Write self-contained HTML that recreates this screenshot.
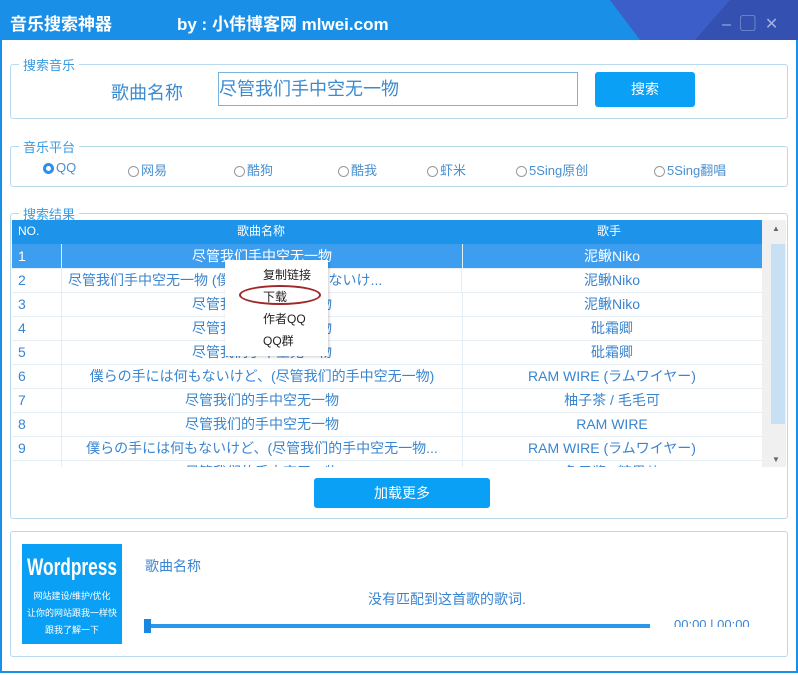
<!DOCTYPE html><html><head><meta charset="utf-8"><style>
body{margin:0;width:798px;height:675px;overflow:hidden;font-family:"Liberation Sans","Noto Sans CJK SC",sans-serif;background:#fff;position:relative}
.a{position:absolute}
.win{position:absolute;left:0;top:0;width:794px;height:671px;border:2px solid #1a8fe8;border-top:none}
fieldset{position:absolute;border:1px solid #b9d9ec;border-radius:3px;margin:0;padding:0}
legend{color:#3b9be0;font-size:13px;padding:0 4px;margin-left:8px}
.row{position:absolute;left:12px;width:750px;height:24px;border-bottom:1px solid #e6eef5;color:#3a85d0;font-size:14px;line-height:24px}
.row span{position:absolute;top:0;text-align:center;white-space:nowrap;overflow:hidden}
.c1{left:0;width:50px;text-align:left!important;padding-left:6px;box-sizing:border-box;border-right:1px solid #e6eef5;height:24px}
.c2{left:50px;width:400px;border-right:1px solid #e6eef5;height:24px}
.c3{left:450px;width:300px}
.radio{position:absolute;top:160px;font-size:13px;color:#4a8fd0}
.radio i{display:inline-block;width:11px;height:11px;border:1px solid #999;border-radius:50%;vertical-align:-2px;margin-right:2px;background:#fff;box-sizing:border-box}
</style></head><body>
<div class="win"></div>
<div class="a" style="left:0;top:0;width:798px;height:40px;background:#1a8fe8"></div>
<svg class="a" style="left:600px;top:0" width="198" height="40"><polygon points="10,0 198,0 198,40 40,40" fill="#3b5ec8"/><polygon points="130,0 198,0 198,40 95,40" fill="#3450b0"/></svg>
<div class="a" style="left:10px;top:10px;color:#fff;font-size:17px;font-weight:bold">音乐搜索神器</div>
<div class="a" style="left:177px;top:10px;color:#fff;font-size:17px;font-weight:bold">by : 小伟博客网 mlwei.com</div>
<div class="a" style="left:722px;top:10px;color:#9fb4de;font-size:16px;letter-spacing:9px">–▢✕</div>

<fieldset style="left:10px;top:55px;width:776px;height:62px"><legend>搜索音乐</legend></fieldset>
<div class="a" style="left:111px;top:79px;color:#3b8bd0;font-size:18px">歌曲名称</div>
<div class="a" style="left:218px;top:72px;color:#3b8bd0;font-size:18px;line-height:32px;box-sizing:border-box;width:360px;height:34px;border:1px solid #7ab4dc">尽管我们手中空无一物</div>
<div class="a" style="left:595px;top:72px;width:100px;height:35px;background:#0aa0f6;border-radius:3px;color:#fff;font-size:14px;text-align:center;line-height:35px">搜索</div>

<fieldset style="left:10px;top:137px;width:776px;height:48px"><legend>音乐平台</legend></fieldset>
<div class="radio" style="left:43px"><i style="border:3px solid #2a8ff0;background:#fff"></i>QQ</div>
<div class="radio" style="left:128px"><i></i>网易</div>
<div class="radio" style="left:234px"><i></i>酷狗</div>
<div class="radio" style="left:338px"><i></i>酷我</div>
<div class="radio" style="left:427px"><i></i>虾米</div>
<div class="radio" style="left:516px"><i></i>5Sing原创</div>
<div class="radio" style="left:654px"><i></i>5Sing翻唱</div>

<fieldset style="left:10px;top:204px;width:776px;height:313px"><legend>搜索结果</legend></fieldset>
<div class="a" style="left:12px;top:220px;width:750px;height:24px;background:#1d93ea;color:#fff;font-size:12px;line-height:22px"><span class="a" style="left:6px">NO.</span><span class="a" style="left:225px">歌曲名称</span><span class="a" style="left:585px">歌手</span></div>
<div class="a" style="left:762px;top:220px;width:24px;height:247px;background:#f0f0f0"></div>
<div class="a" style="left:771px;top:244px;width:14px;height:180px;background:#c8e0f4"></div>
<div class="a" style="left:772px;top:224px;font-size:8px;color:#666">▲</div>
<div class="a" style="left:772px;top:455px;font-size:8px;color:#666">▼</div>
<div class="a" style="left:12px;top:244px;width:750px;height:223px;overflow:hidden">
<div class="row" style="top:0;left:0;background:#3d9ef0;color:#fff"><span class="c1">1</span><span class="c2">尽管我们手中空无一物</span><span class="c3">泥鳅Niko</span></div>
<div class="row" style="top:24px;left:0"><span class="c1">2</span><span class="c2" style="text-align:left;padding-left:6px;box-sizing:border-box">尽管我们手中空无一物 (僕らの手には何もないけ...</span><span class="c3">泥鳅Niko</span></div>
<div class="row" style="top:48px;left:0"><span class="c1">3</span><span class="c2">尽管我们手中空无一物</span><span class="c3">泥鳅Niko</span></div>
<div class="row" style="top:72px;left:0"><span class="c1">4</span><span class="c2">尽管我们手中空无一物</span><span class="c3">砒霜卿</span></div>
<div class="row" style="top:96px;left:0"><span class="c1">5</span><span class="c2">尽管我们手中空无一物</span><span class="c3">砒霜卿</span></div>
<div class="row" style="top:120px;left:0"><span class="c1">6</span><span class="c2">僕らの手には何もないけど、(尽管我们的手中空无一物)</span><span class="c3">RAM WIRE (ラムワイヤー)</span></div>
<div class="row" style="top:144px;left:0"><span class="c1">7</span><span class="c2">尽管我们的手中空无一物</span><span class="c3">柚子茶 / 毛毛可</span></div>
<div class="row" style="top:168px;left:0"><span class="c1">8</span><span class="c2">尽管我们的手中空无一物</span><span class="c3">RAM WIRE</span></div>
<div class="row" style="top:192px;left:0"><span class="c1">9</span><span class="c2">僕らの手には何もないけど、(尽管我们的手中空无一物...</span><span class="c3">RAM WIRE (ラムワイヤー)</span></div>
<div class="row" style="top:216px;left:0"><span class="c1">10</span><span class="c2">尽管我们的手中空无一物</span><span class="c3">鱼子酱 / 糖果儿</span></div>
</div>
<div class="a" style="left:225px;top:260px;width:103px;height:96px;background:#fff;box-shadow:1px 1px 3px rgba(0,0,0,.2);font-size:12px;color:#222">
<div class="a" style="left:38px;top:6px">复制链接</div><div class="a" style="left:38px;top:28px">下载</div><div class="a" style="left:38px;top:50px">作者QQ</div><div class="a" style="left:38px;top:72px">QQ群</div></div>
<div class="a" style="left:239px;top:285px;width:82px;height:20px;border:2px solid #a02828;border-radius:50%;box-sizing:border-box"></div>
<div class="a" style="left:314px;top:478px;width:176px;height:30px;background:#0aa0f6;border-radius:3px;color:#fff;font-size:14px;text-align:center;line-height:30px">加载更多</div>

<div class="a" style="left:10px;top:531px;width:776px;height:124px;border:1px solid #b9d9ec;border-radius:3px"></div>
<div class="a" style="left:22px;top:544px;width:100px;height:100px;background:#0aa0f6;color:#fff;text-align:center;overflow:hidden">
<div style="font-size:24px;font-weight:bold;margin-top:10px;transform:scaleX(.72);white-space:nowrap;margin-left:-20px;margin-right:-20px">Wordpress</div>
<div style="font-size:9px;margin-top:6px;line-height:17px">网站建设/维护/优化<br>让你的网站跟我一样快<br>跟我了解一下</div></div>
<div class="a" style="left:145px;top:556px;font-size:14px;color:#3a85d0">歌曲名称</div>
<div class="a" style="left:368px;top:589px;font-size:14px;color:#3a85d0">没有匹配到这首歌的歌词.</div>
<div class="a" style="left:147px;top:624px;width:503px;height:4px;background:#2a98e8"></div>
<div class="a" style="left:144px;top:619px;width:7px;height:14px;background:#1a88e0"></div>
<div class="a" style="left:674px;top:617px;font-size:13px;color:#3a85d0;height:10px;overflow:hidden">00:00 | 00:00</div>
</body></html>
